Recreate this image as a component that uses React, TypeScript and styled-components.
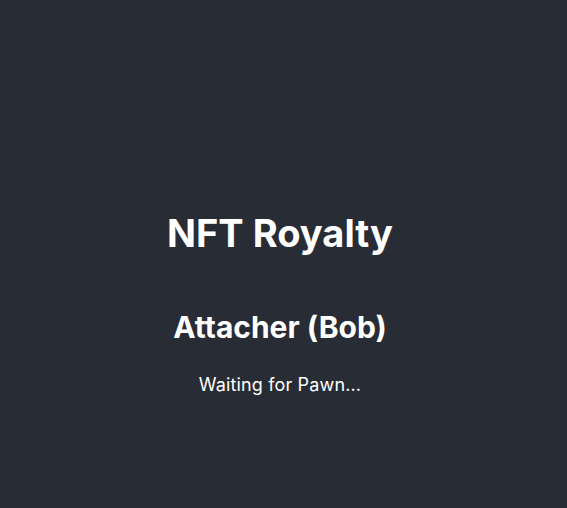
import React from "react";
import styled, { createGlobalStyle } from "styled-components";

const GlobalStyle = createGlobalStyle`
  html, body {
    margin: 0;
    padding: 0;
    background: #282c34;
  }
  body {
    font-family: Inter, "Noto Sans", sans-serif;
  }
`;

const Page = styled.main`
  min-height: 508px;
  box-sizing: border-box;
  padding: 210px 7px 0 0;
  display: flex;
  flex-direction: column;
  align-items: center;
  background: #282c34;
  color: #ffffff;
  text-align: center;
`;

const Title = styled.h1`
  margin: 0;
  font-size: 38px;
  line-height: 46px;
  font-weight: 700;
`;

const Role = styled.h2`
  margin: 53px 0 0;
  font-size: 30px;
  line-height: 36px;
  font-weight: 700;
`;

const Status = styled.p`
  margin: 29px 0 0;
  font-size: 18px;
  line-height: 22px;
  letter-spacing: 0.15px;
  font-weight: 400;
`;

export default function App() {
  return (
    <>
      <GlobalStyle />
      <Page>
        <Title>NFT Royalty</Title>
        <Role>Attacher (Bob)</Role>
        <Status>Waiting for Pawn...</Status>
      </Page>
    </>
  );
}
